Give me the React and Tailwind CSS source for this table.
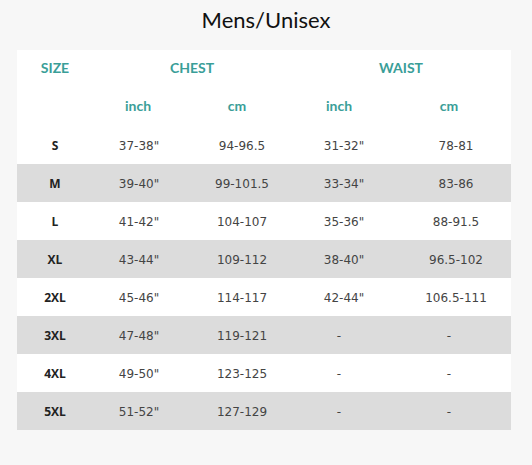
import React from "react";

const ROWS = [
  ["S", "37-38\"", "94-96.5", "31-32\"", "78-81"],
  ["M", "39-40\"", "99-101.5", "33-34\"", "83-86"],
  ["L", "41-42\"", "104-107", "35-36\"", "88-91.5"],
  ["XL", "43-44\"", "109-112", "38-40\"", "96.5-102"],
  ["2XL", "45-46\"", "114-117", "42-44\"", "106.5-111"],
  ["3XL", "47-48\"", "119-121", "-", "-"],
  ["4XL", "49-50\"", "123-125", "-", "-"],
  ["5XL", "51-52\"", "127-129", "-", "-"],
];

const GRID = "grid grid-cols-[76px_90px_108px_96px_124px]";

// small nudges so values sit where the reference puts them
const valuePad = ["", "pl-[2px]", "pl-[10px]", "pl-[10px]", "pl-[14px]"];

const App = () => {
  return (
    <div className="min-h-[465px] w-[532px] bg-[#f7f7f7] pt-[5px] font-['Lato',sans-serif]">
      <h1 className="text-center text-[22px] leading-[30px] text-[#111]">
        Mens/Unisex
      </h1>

      <div className="ml-[17px] mt-[15px] w-[494px] bg-white">
        {/* header rows */}
        <div className={`${GRID} h-[38px] items-center pb-[4px] text-[14px] font-bold text-[#3a9e98]`}>
          <div className="text-center">SIZE</div>
          <div className="col-span-2 text-center">CHEST</div>
          <div className="col-span-2 text-center">WAIST</div>
        </div>
        <div className={`${GRID} h-[38px] items-center pb-[4px] text-[14px] font-bold text-[#3a9e98]`}>
          <div />
          <div className="text-center">inch</div>
          <div className="text-center">cm</div>
          <div className="text-center">inch</div>
          <div className="text-center">cm</div>
        </div>

        {ROWS.map((row, i) => (
          <div
            key={row[0]}
            className={`${GRID} h-[38px] items-center ${i % 2 === 1 ? "bg-[#dcdcdc]" : "bg-white"}`}
          >
            {row.map((cell, j) =>
              j === 0 ? (
                <div
                  key={j}
                  className="pt-[1px] text-center font-['Open_Sans',sans-serif] text-[12px] font-bold text-[#222]"
                >
                  {cell}
                </div>
              ) : (
                <div
                  key={j}
                  className={`pt-[1px] text-center font-['DejaVu_Sans',sans-serif] text-[12px] text-[#444] ${cell === "-" ? "" : valuePad[j]}`}
                >
                  {cell}
                </div>
              )
            )}
          </div>
        ))}
      </div>
    </div>
  );
};

export default App;
